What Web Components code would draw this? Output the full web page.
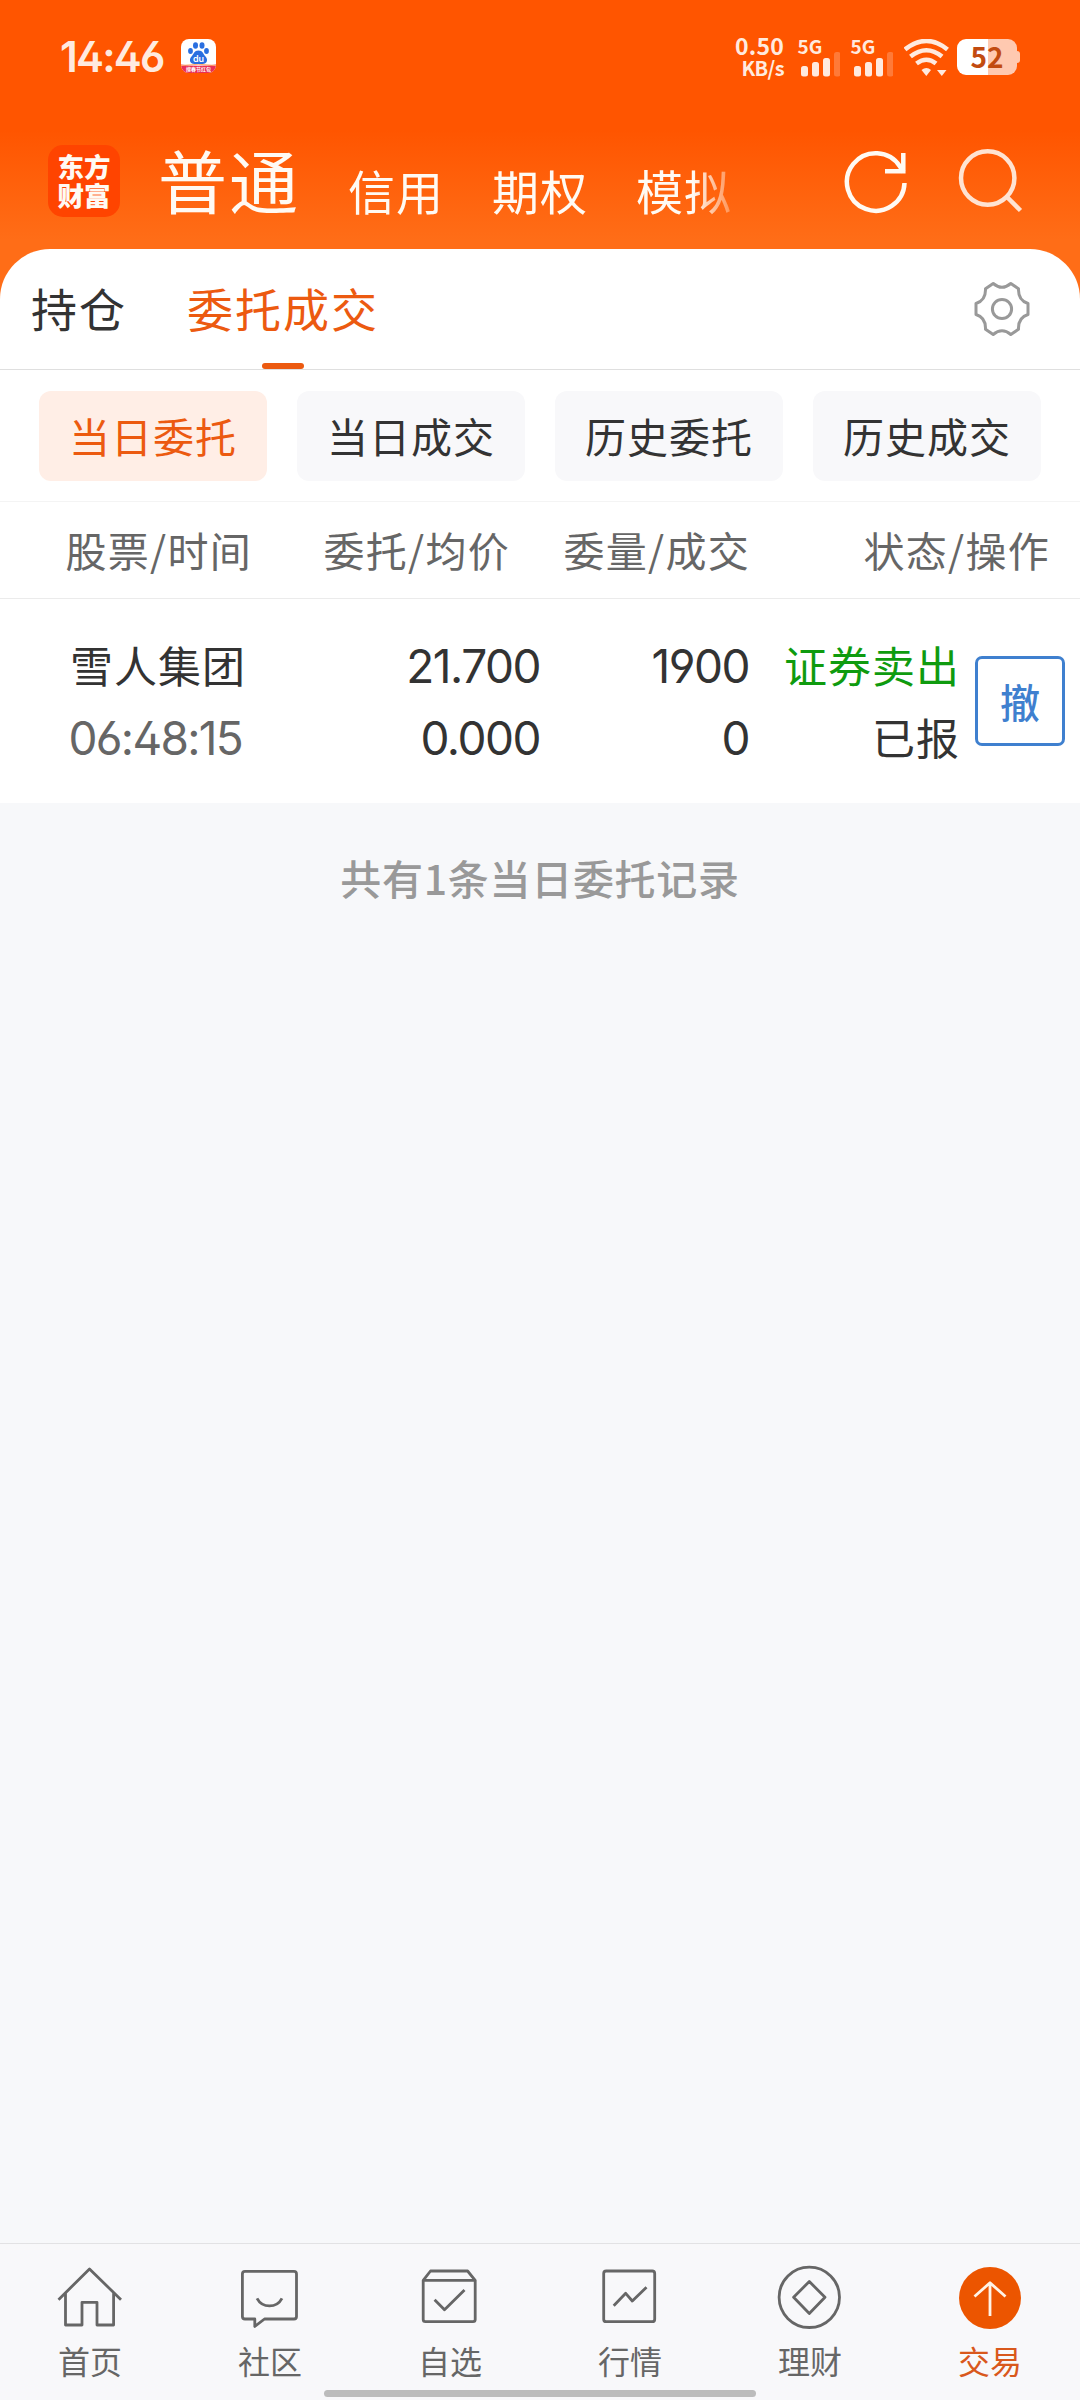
<!DOCTYPE html>
<html lang="zh-CN">
<head>
<meta charset="utf-8">
<title>委托成交</title>
<style>
  html, body {
    margin: 0;
    padding: 0;
  }

  body {
    width: 1080px;
    height: 2400px;
    overflow: hidden;
    font-family: "Noto Sans CJK SC", sans-serif;
    color: #333;
    --brand: #ec5a10;
    --num: Inter, "Noto Sans CJK SC", sans-serif;
  }
</style>
</head>
<body>
<trade-app>
  <status-bar slot="top" time="14:46" speed="0.50" battery="52"></status-bar>
  <account-bar slot="top">
    <span slot="current">普通</span>
    <span>信用</span>
    <span>期权</span>
    <span>模拟</span>
  </account-bar>
  <page-tabs>
    <page-tab>持仓</page-tab>
    <page-tab active>委托成交</page-tab>
  </page-tabs>
  <filter-bar>
    <filter-chip active>当日委托</filter-chip>
    <filter-chip>当日成交</filter-chip>
    <filter-chip>历史委托</filter-chip>
    <filter-chip>历史成交</filter-chip>
  </filter-bar>
  <order-head>
    <span>股票/时间</span>
    <span>委托/均价</span>
    <span>委量/成交</span>
    <span>状态/操作</span>
  </order-head>
  <order-row name="雪人集团" time="06:48:15" price="21.700" avg="0.000" amount="1900" filled="0" side="证券卖出" state="已报">撤</order-row>
  <list-summary slot="rest">共有1条当日委托记录</list-summary>
  <nav-bar slot="bottom">
    <nav-item icon="home">首页</nav-item>
    <nav-item icon="chat">社区</nav-item>
    <nav-item icon="pick">自选</nav-item>
    <nav-item icon="chart">行情</nav-item>
    <nav-item icon="wealth">理财</nav-item>
    <nav-item icon="trade" active>交易</nav-item>
  </nav-bar>
</trade-app>

<script>
// Bas för alla element: lägger in markup i en öppen shadowDOM
class BaseElement extends HTMLElement {
  constructor() {
    super();
    const template = document.createElement('template');
    template.innerHTML = this.render();
    this.attachShadow({ mode: 'open' });
    this.shadowRoot.appendChild(template.content.cloneNode(true));
  }
}

class TradeApp extends BaseElement {
  render() {
    return `
      <style>
        :host {
          display: flex;
          flex-direction: column;
          width: 1080px;
          height: 2400px;
          background: linear-gradient(#ff5500 0, #ff5500 130px, #ff6d17 240px, #ff6d17 320px, #f7f8fa 320px);
        }
        .card {
          background: #fff;
          border-radius: 50px 50px 0 0;
          height: 554px;
        }
        .rest {
          flex: 1;
          background: #f7f8fa;
        }
      </style>
      <slot name="top"></slot>
      <div class="card"><slot></slot></div>
      <div class="rest"><slot name="rest"></slot></div>
      <slot name="bottom"></slot>
    `;
  }
}

class StatusBar extends BaseElement {
  render() {
    // signalstaplar, den sista är svag
    const signal = `
      <div class="signal">
        <b>5G</b>
        <svg width="42" height="26" viewBox="0 0 42 26" fill="#ffeadf">
          <rect x="3" y="15" width="7" height="10.500" rx="2.500"/>
          <rect x="14" y="11" width="7" height="14.500" rx="2.500"/>
          <rect x="25" y="7" width="7" height="18.500" rx="2.500"/>
          <rect x="36" y="1" width="6.500" height="24.500" rx="2.500" fill="#ff7a38"/>
        </svg>
      </div>`;
    return `
      <style>
        :host {
          display: flex;
          align-items: flex-start;
          height: 114px;
          padding-left: 60px;
          box-sizing: border-box;
          color: #ffeadf;
        }
        .time {
          font: 600 42px/50px var(--num);
          letter-spacing: -1.800px;
          font-feature-settings: "ss01";
          width: 121px;
          margin-top: 32px;
        }
        .baidu { margin-top: 39px; }
        .speed {
          margin: 33px 0 0 auto;
          width: 50px;
          text-align: right;
          font: 700 23px/24px "Noto Sans CJK SC", sans-serif;
          letter-spacing: .2px;
        }
        .speed div + div {
          font-size: 20px;
          line-height: 22px;
          letter-spacing: -.6px;
        }
        .signal {
          width: 42px;
          margin: 37px 0 0 14px;
        }
        .signal + .signal { margin-left: 11px; }
        .signal b {
          display: block;
          font-size: 19px;
          line-height: 18px;
          height: 14px;
          margin-left: -.5px;
        }
        .signal svg { display: block; }
        .wifi { margin: 39px 0 0 11px; }
        .battery {
          display: flex;
          align-items: center;
          margin: 39px 60px 0 8px;
        }
        .cell {
          width: 60px;
          height: 36px;
          border-radius: 9px;
          background: linear-gradient(90deg, #fff 31px, #ffc9b0 31px);
          color: #c24b10;
          font: 700 28px/34px "Noto Sans CJK SC", sans-serif;
          text-align: center;
        }
        .tip {
          width: 3px;
          height: 12px;
          border-radius: 0 3px 3px 0;
          background: #ffc9b0;
        }
      </style>
      <div class="time"></div>
      <svg class="baidu" width="35" height="34" viewBox="0 0 35 34">
        <defs><clipPath id="r"><rect width="35" height="34" rx="8"/></clipPath></defs>
        <g clip-path="url(#r)">
          <rect width="35" height="34" fill="#fff"/>
          <path d="M0 25.500Q17 28 35 25.500V34H0Z" fill="#ea2f55"/>
          <path d="M0 26.500Q17 24 35 26.500" fill="none" stroke="#ffb070" stroke-width="1"/>
          <g fill="#2a6fe0">
            <ellipse cx="14.500" cy="6.500" rx="2.500" ry="3.200"/>
            <ellipse cx="21" cy="6.500" rx="2.500" ry="3.200"/>
            <ellipse cx="9.500" cy="12" rx="2.400" ry="3"/>
            <ellipse cx="25.500" cy="12" rx="2.400" ry="3"/>
            <path d="M17.500 11.500C22 11.500 22 15 24.500 17.500C27.500 20.500 26 25 21.500 25H13.500C9 25 7.500 20.500 10.500 17.500C13 15 13 11.500 17.500 11.500Z"/>
          </g>
          <text x="17.500" y="22.500" font-family="Inter" font-weight="600" font-size="9" fill="#fff" text-anchor="middle">du</text>
          <text x="17.500" y="32.300" font-family="Noto Sans CJK SC" font-weight="700" font-size="5" fill="#fff" text-anchor="middle">搜春节红包</text>
        </g>
      </svg>
      <div class="speed"><div class="num"></div><div>KB/s</div></div>
      ${signal}${signal}
      <svg class="wifi" width="45" height="38" viewBox="0 0 45 38" fill="none" stroke="#ffeadf" stroke-width="4.600">
        <path d="M1 10.500Q22.500 -6.500 43.500 10.500"/>
        <path d="M6.500 17.500Q22.500 5 38 17.500"/>
        <path d="M12.500 24.500Q22.500 17 32 24.500"/>
        <path d="M17.500 31Q22.500 27 27 31L22.300 37Z" fill="#ffeadf" stroke="none"/>
        <path d="M33 31H42.500L37.800 37Z" fill="#ffeadf" stroke="none"/>
      </svg>
      <div class="battery"><div class="cell"></div><div class="tip"></div></div>
    `;
  }

  connectedCallback() {
    this.shadowRoot.querySelector('.time').textContent = this.getAttribute('time');
    this.shadowRoot.querySelector('.num').textContent = this.getAttribute('speed');
    this.shadowRoot.querySelector('.cell').textContent = this.getAttribute('battery');
  }
}

class AccountBar extends BaseElement {
  render() {
    return `
      <style>
        :host {
          display: flex;
          align-items: flex-start;
          height: 135px;
          padding-left: 48px;
          box-sizing: border-box;
          color: #fffaf3;
        }
        .logo {
          width: 72px;
          height: 72px;
          margin-top: 31px;
          padding-top: 6px;
          box-sizing: border-box;
          border-radius: 15px;
          background: #ff4400;
          font-size: 26.500px;
          font-weight: 900;
          line-height: 29px;
          text-align: center;
        }
        .current {
          margin: 19px 0 0 38px;
          width: 190px;
          font-size: 69px;
          line-height: 92px;
          letter-spacing: 2px;
        }
        .others {
          display: flex;
          gap: 48px;
          margin-top: 46px;
          width: 382px;
          font-size: 47px;
          line-height: 60px;
          letter-spacing: 1px;
          white-space: nowrap;
          -webkit-mask: linear-gradient(90deg, #000 345px, transparent 400px);
          mask: linear-gradient(90deg, #000 345px, transparent 400px);
        }
        svg { display: block; fill: none; stroke-width: 4.500; }
        .refresh { margin: 32px 0 0 auto; stroke: #fffaf3; }
        .search { margin: 32px 56px 0 48px; stroke: #ffe3d2; }
      </style>
      <div class="logo">东方<br>财富</div>
      <div class="current"><slot name="current"></slot></div>
      <div class="others"><slot></slot></div>
      <svg class="refresh" width="68" height="72" viewBox="0 0 68 72">
        <path d="M62.500 37A28.800 28.800 0 1 1 58 20.500L61.500 26"/>
        <path d="M61.300 7V25.200H43"/>
      </svg>
      <svg class="search" width="66" height="72" viewBox="0 0 66 72">
        <circle cx="29.700" cy="32" r="26.700"/>
        <path d="M48.500 50.500L62.500 64.500"/>
      </svg>
    `;
  }
}

class PageTabs extends BaseElement {
  render() {
    return `
      <style>
        :host {
          display: flex;
          gap: 60px;
          height: 121px;
          padding: 0 48px 0 31px;
          box-sizing: border-box;
          border-bottom: 1px solid #dfdfdf;
        }
        svg {
          margin: 30px 0 0 auto;
          fill: none;
          stroke: #999;
          stroke-width: 3;
          stroke-linejoin: round;
        }
      </style>
      <slot></slot>
      <svg width="60" height="60" viewBox="-30 -30 60 60">
        <path d="M-8.800 -25.500Q0 -18 8.800 -25.500L16.500 -20.300Q16 -8.500 26 -5.500V5.500Q16 8.500 16.500 20.300L8.800 25.500Q0 18 -8.800 25.500L-16.500 20.300Q-16 8.500 -26 5.500V-5.500Q-16 -8.500 -16.500 -20.300Z"/>
        <circle r="9.600"/>
      </svg>
    `;
  }
}

class PageTab extends BaseElement {
  render() {
    return `
      <style>
        :host {
          display: flex;
          flex-direction: column;
          align-items: center;
          justify-content: space-between;
          height: 120px;
          font-size: 46px;
          line-height: 60px;
          letter-spacing: 2px;
        }
        :host([active]) { color: var(--brand); }
        .text { margin-top: 28px; }
        .line {
          width: 42px;
          height: 6.500px;
          border-radius: 4px;
        }
        :host([active]) .line { background: var(--brand); }
      </style>
      <div class="text"><slot></slot></div>
      <div class="line"></div>
    `;
  }
}

class FilterBar extends BaseElement {
  render() {
    return `
      <style>
        :host {
          display: grid;
          grid-template-columns: repeat(4, 228px);
          gap: 30px;
          height: 132px;
          padding: 21px 39px 0;
          box-sizing: border-box;
          border-bottom: 1px solid #f4f4f4;
        }
      </style>
      <slot></slot>
    `;
  }
}

class FilterChip extends BaseElement {
  render() {
    return `
      <style>
        :host {
          display: block;
          height: 90px;
          border-radius: 12px;
          background: #f8f8fa;
          font-size: 41px;
          line-height: 88px;
          letter-spacing: 1px;
          text-align: center;
        }
        :host([active]) {
          background: #ffeee6;
          color: var(--brand);
        }
      </style>
      <slot></slot>
    `;
  }
}

class OrderHead extends BaseElement {
  render() {
    return `
      <style>
        :host {
          display: grid;
          grid-template-columns: 252px 258px 240px 300px;
          height: 97px;
          box-sizing: border-box;
          border-bottom: 1px solid #ebebeb;
          color: #666;
          font-size: 41px;
          line-height: 94px;
          letter-spacing: 1.300px;
          text-align: right;
        }
      </style>
      <slot></slot>
    `;
  }
}

class OrderRow extends BaseElement {
  render() {
    return `
      <style>
        :host {
          display: grid;
          grid-template-columns: 180px 290px 209px 211px 90px;
          padding: 29px 0 0 70px;
          line-height: 72px;
          font-size: 43px;
          letter-spacing: 1px;
          text-align: right;
        }
        .name { text-align: left; white-space: nowrap; }
        .num {
          font-family: var(--num);
          font-feature-settings: "ss01";
          font-size: 46px;
          letter-spacing: -1.500px;
        }
        .col { padding-top: 2px; }
        .time {
          color: #666;
          margin: 2px 0 0 -1.500px;
          letter-spacing: -1.700px;
        }
        .side { color: #0f9b0f; }
        button {
          width: 90px;
          height: 90px;
          margin: 28px 0 0 15px;
          padding: 0;
          border: 3px solid #3f80cf;
          border-radius: 7px;
          background: #fff;
          color: #3f80cf;
          font: 500 40px/84px "Noto Sans CJK SC", sans-serif;
        }
      </style>
      <div class="name"><div data-attr="name"></div><div class="num time" data-attr="time"></div></div>
      <div class="num col"><div data-attr="price"></div><div data-attr="avg"></div></div>
      <div class="num col"><div data-attr="amount"></div><div data-attr="filled"></div></div>
      <div><div class="side" data-attr="side"></div><div data-attr="state"></div></div>
      <button><slot></slot></button>
    `;
  }

  // Hämtar värdena från attributen och lägger in dem i raden
  connectedCallback() {
    this.shadowRoot.querySelectorAll('[data-attr]').forEach(cell => {
      cell.textContent = this.getAttribute(cell.dataset.attr);
    });
  }
}

class ListSummary extends BaseElement {
  render() {
    return `
      <style>
        :host {
          display: block;
          padding-top: 44px;
          color: #999;
          font-size: 41px;
          font-weight: 500;
          line-height: 60px;
          letter-spacing: .7px;
          text-align: center;
        }
      </style>
      <slot></slot>
    `;
  }
}

class NavBar extends BaseElement {
  render() {
    return `
      <style>
        :host {
          display: block;
          height: 157px;
          box-sizing: border-box;
          border-top: 1px solid #e2e2e4;
          background: #f8f8fa;
        }
        .items {
          display: grid;
          grid-template-columns: repeat(6, 180px);
          height: 146px;
        }
        .handle {
          width: 432px;
          height: 7px;
          margin: 0 auto;
          border-radius: 4px;
          background: #bcbcbc;
        }
      </style>
      <div class="items"><slot></slot></div>
      <div class="handle"></div>
    `;
  }
}

const icons = {
  home: '<path d="M4.500 37.700L35.500 7L67 37.700M11.500 31V63H28V40.300H43V63H59.600V31"/>',
  chat: '<path d="M11 9.300H60Q62.500 9.300 62.500 12V54.500Q62.500 57 60 57H30.500L20.800 64.500V57H11Q8.400 57 8.400 54.500V12Q8.400 9.300 11 9.300ZM23 36.300C28.500 46.500 42.500 46.500 48 36.300"/>',
  pick: '<path d="M9.200 18.300L16.500 9H53.600L61.200 18.300ZM9.200 18.300V57.500Q9.200 59.700 11.500 59.700H59Q61.200 59.700 61.200 57.500V18.300M20.600 37.700L30.500 47.700L50.500 28"/>',
  chart: '<rect x="9.700" y="9" width="51" height="50.700" rx="2.500"/><path d="M19.700 43.700L31.700 31.300L38.300 39L52.500 25.300"/>',
  wealth: '<circle cx="35.300" cy="35.300" r="30.200"/><path d="M35.300 19.500L51 35.300L35.300 51.500L19.600 35.300Z"/>',
  trade: '<circle cx="36" cy="36" r="31" fill="#ec5500" stroke="none"/><path d="M36 54V21M20.500 34.500L36 20.800L51.500 34.500" stroke="#fff3e6"/>'
};

class NavItem extends BaseElement {
  render() {
    return `
      <style>
        :host {
          display: flex;
          flex-direction: column;
          align-items: center;
          padding-top: 18px;
          color: #666;
          font-size: 32px;
          line-height: 48px;
        }
        :host([active]) { color: #d9581c; }
        svg {
          display: block;
          fill: none;
          stroke: #666;
          stroke-width: 2.800;
          stroke-linejoin: round;
        }
        .label { margin-top: 2px; }
      </style>
      <svg width="72" height="72" viewBox="0 0 72 72"></svg>
      <div class="label"><slot></slot></div>
    `;
  }

  connectedCallback() {
    this.shadowRoot.querySelector('svg').innerHTML = icons[this.getAttribute('icon')];
  }
}

window.customElements.define('trade-app', TradeApp);
window.customElements.define('status-bar', StatusBar);
window.customElements.define('account-bar', AccountBar);
window.customElements.define('page-tabs', PageTabs);
window.customElements.define('page-tab', PageTab);
window.customElements.define('filter-bar', FilterBar);
window.customElements.define('filter-chip', FilterChip);
window.customElements.define('order-head', OrderHead);
window.customElements.define('order-row', OrderRow);
window.customElements.define('list-summary', ListSummary);
window.customElements.define('nav-bar', NavBar);
window.customElements.define('nav-item', NavItem);
</script>
</body>
</html>
